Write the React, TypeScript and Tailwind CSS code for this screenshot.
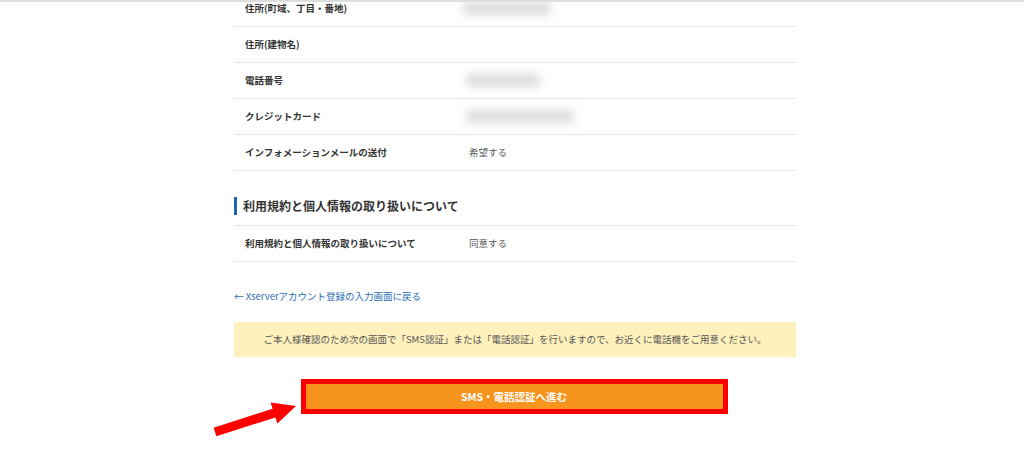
import React from "react";

const font = { fontFamily: '"Noto Sans CJK JP", "Noto Sans", sans-serif' };

function Blur({ w, shift = 0 }: { w: number; shift?: number }) {
  return (
    <div className="relative h-[13px]" style={{ marginLeft: shift }}>
      <div className="h-full rounded-sm bg-[#dddddd] blur-[4px]" style={{ width: w }} />
    </div>
  );
}

function Row({ label, value, blur }: { label: string; value?: string; blur?: number }) {
  return (
    <div className="flex h-[36px] items-center border-b border-[#e6e6e6]">
      <div className="w-[235px] pl-[11px] text-[9.5px] font-bold text-[#333]">{label}</div>
      <div className="flex-1 text-[9.5px] text-[#555]">
        {value}
        {blur ? <Blur w={blur} shift={-3} /> : null}
      </div>
    </div>
  );
}

export default function App() {
  return (
    <div className="relative h-[462px] w-[1024px] overflow-hidden border-t-2 border-[#dedede] bg-white" style={font}>
      <div className="ml-[234px] -mt-[11px] w-[562px]">
        <div className="flex h-[36px] items-center border-b border-[#e6e6e6]">
          <div className="w-[235px] pl-[11px] text-[9.5px] font-bold text-[#333]">住所(町域、丁目・番地)</div>
          <div className="flex-1">
            <Blur w={88} shift={-6} />
          </div>
        </div>
        <Row label="住所(建物名)" />
        <Row label="電話番号" blur={74} />
        <Row label="クレジットカード" blur={108} />
        <Row label="インフォメーションメールの送付" value="希望する" />

        <div className="mt-[26px] flex h-[18px] items-center border-l-[3px] border-[#1f64b3] pl-[6px]">
          <span className="text-[12px] font-bold text-[#333]">利用規約と個人情報の取り扱いについて</span>
        </div>
        <div className="mt-[10px] border-b border-[#e6e6e6]" />
        <Row label="利用規約と個人情報の取り扱いについて" value="同意する" />

        <div className="mt-[27px] text-[9.5px] leading-[14px] text-[#2a6db5]">← Xserverアカウント登録の入力画面に戻る</div>

        <div className="mt-[19px] flex h-[35px] items-center justify-center bg-[#fef1bc] text-[9.5px] text-[#555]">
          ご本人様確認のため次の画面で「SMS認証」または「電話認証」を行いますので、お近くに電話機をご用意ください。
        </div>

        <div className="mt-[22px] flex justify-center pr-[2px]">
          <div className="flex h-[35px] w-[427px] items-center justify-center border-[5px] border-[#ff0000] bg-[#f7941e] text-[10.5px] font-bold text-white">
            SMS・電話認証へ進む
          </div>
        </div>
      </div>

      <svg className="pointer-events-none absolute left-0 top-0" width="1024" height="462" viewBox="0 0 1024 462">
        <polygon
          fill="#ff0000"
          points="216.4,434.3 275.4,415.4 277.4,421.6 296,404 270.6,400.6 272.6,406.8 213.6,425.7"
        />
      </svg>
    </div>
  );
}
